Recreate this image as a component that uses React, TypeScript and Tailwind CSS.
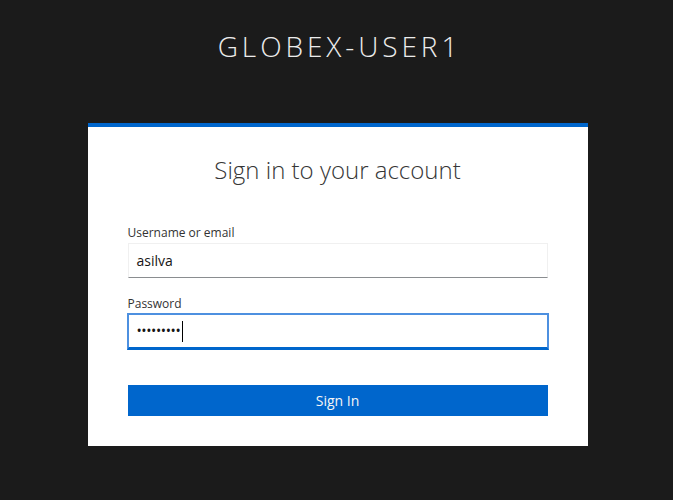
import React from "react";

export default function App() {
  return (
    <div
      className="min-h-[500px] w-full bg-[#1b1b1b] flex flex-col items-center"
      style={{ fontFamily: '"Open Sans", "Noto Sans", sans-serif' }}
    >
      <h1 className="mt-[26px] ml-[6px] h-[40px] leading-[40px] text-[28px] font-light tracking-[0.14em] text-[#ececec]">
        GLOBEX-USER1
      </h1>
      <div className="mt-[57px] ml-[2px] w-[500px] bg-white border-t-4 border-[#0066cc] px-10 pb-[30px]">
        <h2 className="mt-[26px] h-[34px] leading-[34px] text-center text-[24px] font-light text-[#363636]">
          Sign in to your account
        </h2>
        <div className="mt-[36px]">
          <label className="block h-[20px] leading-[20px] text-[12px] text-[#333]">
            Username or email
          </label>
          <div className="h-[35px] border border-[#f0f0f0] border-b-[#8a8d90] flex items-center pl-[8px] text-[14px] text-[#151515]">
            asilva
          </div>
        </div>
        <div className="mt-[17px]">
          <label className="block h-[18px] leading-[18px] text-[12px] text-[#333]">
            Password
          </label>
          <div className="-mx-px h-[37px] border-2 border-[#4d90e0] border-b-[3px] border-b-[#0066cc] flex items-center pl-[8px] text-[14px] text-[#151515]">
            <span className="text-[14px] tracking-[-0.4px] leading-none">•••••••••</span>
            <span className="ml-[2px] w-px h-[21px] bg-black" />
          </div>
        </div>
        <button className="mt-[35px] w-full h-[31px] bg-[#0066cc] text-[14px] text-[#f5f5f5] flex items-center justify-center">
          Sign In
        </button>
      </div>
    </div>
  );
}
